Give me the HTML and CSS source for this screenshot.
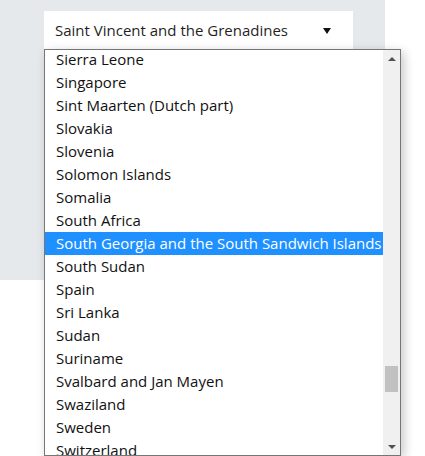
FILE: index.html
```html
<!DOCTYPE html>
<html>
<head>
<meta charset="utf-8">
<link rel="stylesheet" href="styles.css">
</head>
<body>
<div class="panel">
  <div class="select">
    <span class="select-value">Saint Vincent and the Grenadines</span>
    <span class="select-arrow"></span>
  </div>
</div>
<div class="listbox">
  <ul class="options">
    <li>Sierra Leone</li>
    <li>Singapore</li>
    <li>Sint Maarten (Dutch part)</li>
    <li>Slovakia</li>
    <li>Slovenia</li>
    <li>Solomon Islands</li>
    <li>Somalia</li>
    <li>South Africa</li>
    <li class="selected">South Georgia and the South Sandwich Islands</li>
    <li>South Sudan</li>
    <li>Spain</li>
    <li>Sri Lanka</li>
    <li>Sudan</li>
    <li>Suriname</li>
    <li>Svalbard and Jan Mayen</li>
    <li>Swaziland</li>
    <li>Sweden</li>
    <li>Switzerland</li>
  </ul>
  <div class="scrollbar">
    <div class="sb-btn"><span class="tri-up"></span></div>
    <div class="sb-track"><div class="sb-thumb"></div></div>
    <div class="sb-btn"><span class="tri-down"></span></div>
  </div>
</div>
</body>
</html>
```
FILE: styles.css
```css
html, body {
  margin: 0;
  padding: 0;
  background: #ffffff;
  font-family: "Open Sans", "Liberation Sans", sans-serif;
  font-size: 15px;
}

.panel {
  width: 385px;
  height: 280px;
  box-sizing: border-box;
  padding: 11px 0 0 44px;
  background: #e5e9ec;
}

.select {
  width: 309px;
  height: 40px;
  box-sizing: border-box;
  padding: 0 22px 0 11px;
  background: #ffffff;
  display: flex;
  align-items: flex-start;
  justify-content: space-between;
  color: #1f1f1f;
}

.select-value {
  line-height: 20px;
  margin-top: 9px;
}

.select-arrow {
  width: 0;
  height: 0;
  margin-top: 17px;
  border-left: 4px solid transparent;
  border-right: 4px solid transparent;
  border-top: 6px solid #111111;
}

.listbox {
  position: absolute;
  left: 44px;
  top: 49px;
  width: 357px;
  height: 407px;
  box-sizing: border-box;
  border: 1px solid #767676;
  background: #ffffff;
  display: flex;
  box-shadow: 3px 3px 10px rgba(0, 0, 0, 0.22);
}

.options {
  flex: 1;
  margin: 0;
  padding: 0;
  list-style: none;
  overflow: hidden;
  color: #111111;
}

.options li {
  height: 23px;
  line-height: 22px;
  padding-left: 11px;
  white-space: nowrap;
}

.options li:first-child {
  margin-top: -2px;
}

.options li.selected {
  background: #1e90ff;
  color: #ffffff;
}

.scrollbar {
  width: 17px;
  background: #f0f0f0;
  display: flex;
  flex-direction: column;
}

.sb-btn {
  height: 17px;
  display: flex;
  align-items: center;
  justify-content: center;
}

.tri-up {
  width: 0;
  height: 0;
  border-left: 4px solid transparent;
  border-right: 4px solid transparent;
  border-bottom: 4px solid #505050;
}

.tri-down {
  width: 0;
  height: 0;
  border-left: 4px solid transparent;
  border-right: 4px solid transparent;
  border-top: 4px solid #505050;
}

.sb-track {
  flex: 1;
}

.sb-thumb {
  width: 13px;
  height: 26px;
  margin: 299px 0 0 2px;
  background: #c1c1c1;
}
```
